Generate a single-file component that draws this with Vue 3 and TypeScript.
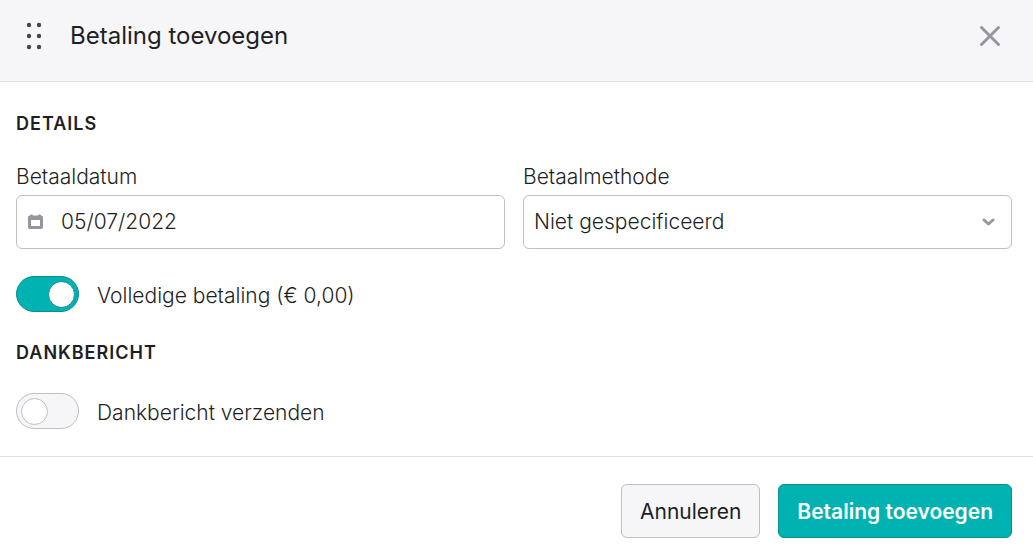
<script setup lang="ts">
import { ref } from 'vue'

const dots: number[][] = [
  [5, 4], [15, 4], [5, 15], [15, 15], [5, 26], [15, 26],
]

const paymentDate = ref('05/07/2022')
const paymentMethod = ref('none')
const fullPayment = ref(true)
const sendThanks = ref(false)
</script>

<template>
  <form class="dialog" @submit.prevent>
    <header class="header">
      <svg class="grip" width="20" height="30" viewBox="0 0 20 30" aria-hidden="true">
        <circle v-for="([x, y], i) in dots" :key="i" :cx="x" :cy="y" r="2.2" />
      </svg>
      <h1 class="title">Betaling toevoegen</h1>
      <button class="close" type="button" aria-label="Sluiten">
        <svg width="22" height="22" viewBox="0 0 22 22" aria-hidden="true">
          <path d="M2.500 2.500 19.500 19.500M19.500 2.500 2.500 19.500" />
        </svg>
      </button>
    </header>

    <main class="body">
      <h2 class="section">Details</h2>
      <div class="fields">
        <div class="field">
          <label for="date">Betaaldatum</label>
          <div class="box">
            <svg class="calendar" width="15" height="16" viewBox="0 0 15 16" aria-hidden="true">
              <path
                fill-rule="evenodd"
                d="M2 1.500C2 .2 5 .2 5 1.500h5c0-1.300 3-1.300 3 0 1.200 0 2 .8 2 2V13c0 1.200-.8 2-2 2H2c-1.200 0-2-.8-2-2V3.500c0-1.200.8-2 2-2zM3 6v6h9V6z"
              />
            </svg>
            <input id="date" v-model="paymentDate" type="text" />
          </div>
        </div>
        <div class="field">
          <label for="method">Betaalmethode</label>
          <div class="box">
            <select id="method" v-model="paymentMethod">
              <option value="none">Niet gespecificeerd</option>
            </select>
            <svg class="chevron" width="13" height="9" viewBox="0 0 13 9" aria-hidden="true">
              <path d="M2 2 6.500 6 11 2" />
            </svg>
          </div>
        </div>
      </div>
      <label class="switch">
        <input v-model="fullPayment" type="checkbox" role="switch" />
        <span>Volledige betaling (€ 0,00)</span>
      </label>
      <h2 class="section">Dankbericht</h2>
      <label class="switch">
        <input v-model="sendThanks" type="checkbox" role="switch" />
        <span>Dankbericht verzenden</span>
      </label>
    </main>

    <footer class="footer">
      <button class="button" type="button">Annuleren</button>
      <button class="button primary" type="submit">Betaling toevoegen</button>
    </footer>
  </form>
</template>

<style>
body {
  margin: 0;
  background: #fff;
}
</style>

<style scoped>
.dialog,
.dialog * {
  box-sizing: border-box;
}

.dialog {
  font-family: Inter, 'Liberation Sans', sans-serif;
  font-size: 21px;
  font-weight: 300;
  line-height: 28px;
  color: #1e1f24;
}

.header {
  display: flex;
  align-items: center;
  padding: 16px 32px 25px 24px;
  min-height: 82px;
  background: #f6f6f9;
  border-bottom: 1px solid #e1e1e4;
}

.grip {
  fill: #45464b;
  margin-right: 26px;
}

.title {
  flex: 1;
  margin: 0;
  font-size: 24px;
  font-weight: 400;
  line-height: 32px;
}

.close {
  display: flex;
  padding: 0;
  border: 0;
  background: none;
  cursor: pointer;
}

.close path {
  stroke: #95969f;
  stroke-width: 3;
  stroke-linecap: round;
}

.body {
  padding: 28px 21px 27px 16px;
}

.section {
  margin: 0;
  font-size: 18px;
  font-weight: 600;
  line-height: 28px;
  letter-spacing: 1px;
  text-transform: uppercase;
}

.fields {
  display: grid;
  grid-template-columns: 1fr 1fr;
  gap: 18px;
  margin: 25px 0 27px;
}

.field {
  display: flex;
  flex-direction: column;
  gap: 4px;
}

.box {
  display: flex;
  align-items: center;
  height: 54px;
  border: 1px solid #bfbfc4;
  border-radius: 6px;
  background: #fff;
}

.box input,
.box select {
  flex: 1;
  min-width: 0;
  height: 100%;
  padding: 0 10px;
  border: 0;
  border-radius: 6px;
  background: transparent;
  appearance: none;
  font: inherit;
  color: inherit;
}

.box input {
  padding: 0 10px 2px 18px;
}

.calendar {
  margin-left: 11px;
  fill: #95969f;
}

.chevron {
  margin-right: 16px;
  pointer-events: none;
}

.chevron path {
  fill: none;
  stroke: #95969f;
  stroke-width: 3;
  stroke-linecap: round;
  stroke-linejoin: round;
}

.switch {
  display: flex;
  align-items: center;
  gap: 18px;
}

.switch span {
  padding-top: 3px;
}

.switch + .section {
  margin: 27px 0 26px;
}

.switch input {
  display: flex;
  align-items: center;
  width: 63px;
  height: 36px;
  margin: 0;
  padding: 0 4px;
  border: 1px solid #bfbfc4;
  border-radius: 18px;
  background: #f6f6f9;
  appearance: none;
}

.switch input::before {
  content: '';
  box-sizing: border-box;
  width: 27px;
  height: 27px;
  border: 1px solid #bfbfc4;
  border-radius: 50%;
  background: #fff;
}

.switch input:checked {
  justify-content: flex-end;
  padding-right: 3px;
  background: #00b2b2;
  border-color: #088f8f;
}

.switch input:checked::before {
  border-color: #088f8f;
}

.footer {
  display: flex;
  justify-content: flex-end;
  gap: 18px;
  padding: 27px 21px 21px;
  border-top: 1px solid #e1e1e4;
}

.button {
  height: 54px;
  padding: 2px 18px 0;
  border: 1px solid #bfbfc4;
  border-radius: 6px;
  background: #f6f6f9;
  color: #1e1f24;
  font: inherit;
  font-weight: 400;
  cursor: pointer;
}

.primary {
  border-color: #088f8f;
  background: #00b2b2;
  color: #fff;
  font-weight: 600;
}
</style>
